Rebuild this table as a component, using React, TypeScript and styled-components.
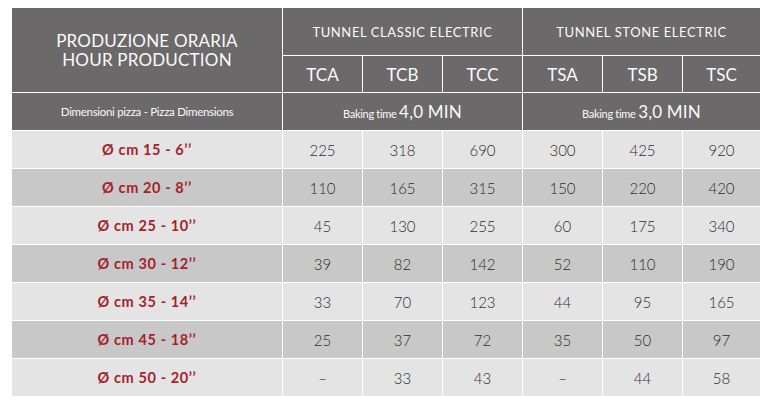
import * as React from 'react';
import styled, { createGlobalStyle } from 'styled-components';

const COLORS = {
    header: '#6c696a',
    light: '#e4e4e4',
    dark: '#c8c8c8',
    red: '#a61f2c',
    text: '#2e2e2e',
    white: '#ffffff',
};

const GlobalStyle = createGlobalStyle`
    html, body {
        margin: 0;
        padding: 0;
        background: #fff;
        font-family: Lato, "Open Sans", sans-serif;
    }
`;

const Page = styled.div`
    padding: 7px 0 0 11px;
`;

const Table = styled.table`
    border-collapse: collapse;
    table-layout: fixed;
    width: 749px;

    td, th {
        border: 1px solid ${COLORS.white};
        padding: 0;
        text-align: center;
        vertical-align: middle;
    }
`;

const HeadCell = styled.th`
    background: ${COLORS.header};
    color: #fafafa;
    font-weight: 400;
`;

const Title = styled(HeadCell)`
    font-size: 17px;
    line-height: 19px;
    letter-spacing: 0.2px;
    padding-top: 2px;
`;

const Group = styled(HeadCell)`
    height: 47px;
    font-size: 13px;
    letter-spacing: 0.6px;
`;

const Model = styled(HeadCell)`
    height: 36px;
    font-size: 17px;
    padding-top: 3px;
`;

const SubLabel = styled(HeadCell)`
    height: 37px;
    font-size: 11.5px;
    letter-spacing: -0.3px;
`;

const Baking = styled(HeadCell)`
    font-size: 11px;
    letter-spacing: -0.3px;
`;

const BakingValue = styled.span`
    font-size: 17px;
    letter-spacing: 0.2px;
`;

const Row = styled.tr<{ $dark: boolean }>`
    td {
        background: ${({ $dark }) => ($dark ? COLORS.dark : COLORS.light)};
        height: 37px;
    }
`;

const SizeCell = styled.td`
    color: ${COLORS.red};
    font-weight: 700;
    font-size: 14.5px;
    letter-spacing: 0.6px;
`;

const ValueCell = styled.td`
    color: ${COLORS.text};
    font-weight: 300;
    font-size: 15px;
`;

const MODELS = ['TCA', 'TCB', 'TCC', 'TSA', 'TSB', 'TSC'];

const ROWS: { size: string; values: string[] }[] = [
    { size: 'Ø cm 15 - 6’’', values: ['225', '318', '690', '300', '425', '920'] },
    { size: 'Ø cm 20 - 8’’', values: ['110', '165', '315', '150', '220', '420'] },
    { size: 'Ø cm 25 - 10’’', values: ['45', '130', '255', '60', '175', '340'] },
    { size: 'Ø cm 30 - 12’’', values: ['39', '82', '142', '52', '110', '190'] },
    { size: 'Ø cm 35 - 14’’', values: ['33', '70', '123', '44', '95', '165'] },
    { size: 'Ø cm 45 - 18’’', values: ['25', '37', '72', '35', '50', '97'] },
    { size: 'Ø cm 50 - 20’’', values: ['–', '33', '43', '–', '44', '58'] },
];

const App = () => (
    <Page>
        <GlobalStyle />
        <Table>
            <colgroup>
                <col style={{ width: 271 }} />
                <col style={{ width: 80 }} />
                <col style={{ width: 80 }} />
                <col style={{ width: 80 }} />
                <col style={{ width: 80 }} />
                <col style={{ width: 80 }} />
                <col style={{ width: 78 }} />
            </colgroup>
            <thead>
                <tr>
                    <Title rowSpan={2}>
                        PRODUZIONE ORARIA
                        <br />
                        HOUR PRODUCTION
                    </Title>
                    <Group colSpan={3}>TUNNEL CLASSIC ELECTRIC</Group>
                    <Group colSpan={3}>TUNNEL STONE ELECTRIC</Group>
                </tr>
                <tr>
                    {MODELS.map((m) => (
                        <Model key={m}>{m}</Model>
                    ))}
                </tr>
                <tr>
                    <SubLabel>Dimensioni pizza - Pizza Dimensions</SubLabel>
                    <Baking colSpan={3}>
                        Baking time <BakingValue>4,0 MIN</BakingValue>
                    </Baking>
                    <Baking colSpan={3}>
                        Baking time <BakingValue>3,0 MIN</BakingValue>
                    </Baking>
                </tr>
            </thead>
            <tbody>
                {ROWS.map((r, i) => (
                    <Row key={r.size} $dark={i % 2 === 1}>
                        <SizeCell>{r.size}</SizeCell>
                        {r.values.map((v, j) => (
                            <ValueCell key={j}>{v}</ValueCell>
                        ))}
                    </Row>
                ))}
            </tbody>
        </Table>
    </Page>
);

export default App;
